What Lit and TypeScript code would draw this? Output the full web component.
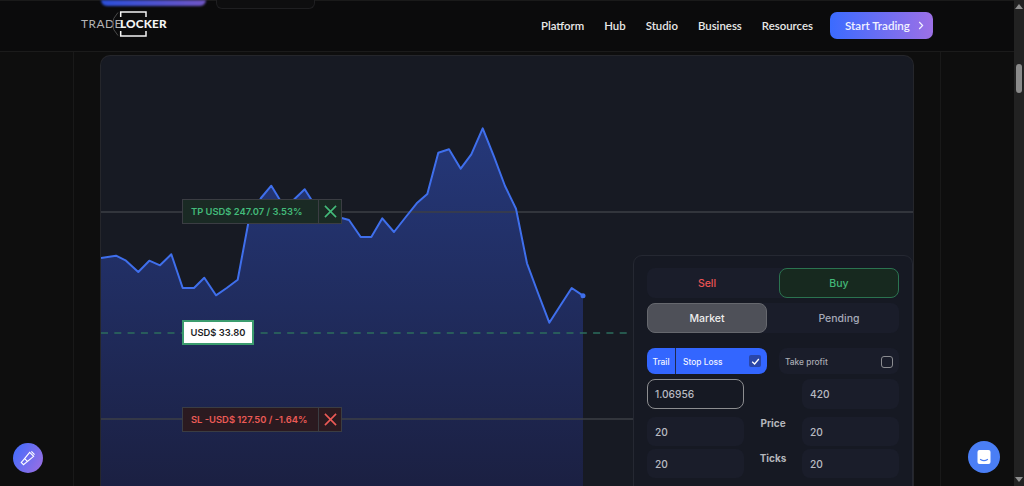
import { LitElement, html, css, svg } from "lit";
import { customElement } from "lit/decorators.js";

const pts: [number, number][] = [
  [101,258],[116,255.7],[126,260.7],[138.3,272],[149.3,260.7],[160,265.3],[171.3,254.3],[182.7,288],[194,288],[204.3,277.7],[216,295.3],[226.7,288],[237.7,279.7],[248.3,223],[261,198],[271.3,185.7],[283,205],[293.5,200],[304.7,189.3],[316.7,208],[327,215],[338,217],[349,220],[360.7,237],[371.3,237],[382.3,218.3],[394,232],[405,218],[416.7,203.3],[427.3,194],[438.3,152.7],[449,149.3],[460.7,168.7],[471.3,154.3],[482.7,128.3],[494,156.7],[505,186],[516,208.7],[527,263.3],[538,293],[549.3,322.7],[560.7,305],[571.7,288],[583,295.7],
];
// chart coordinates are local to the card, whose corner sits at 101,56
const local = pts.map(([x, y]) => `${(x - 101).toFixed(1)},${(y - 56).toFixed(1)}`);
const linePath = "M" + local.join(" L");
const areaPath = `${linePath} L482,430 L0,430 Z`;

const closeIcon = svg`<svg class="x" viewBox="0 0 14 14" width="13" height="13"><path d="M1 1 L13 13 M13 1 L1 13" fill="none" stroke="currentColor" stroke-width="1.7"/></svg>`;

@customElement("app-root")
export class AppRoot extends LitElement {
  static styles = css`
    :host { display: block; width: 1024px; height: 486px; overflow: hidden; position: relative; background: #0e0e0e; font-family: "Inter", "Liberation Sans", sans-serif; }
    .view { display: flex; height: 486px; }
    .page { flex: 1; min-width: 0; display: flex; flex-direction: column; }
    header { height: 52px; flex: none; position: relative; box-sizing: border-box; border-bottom: 1px solid #1b1b1b; border-top: 1px solid #1a1a1a; background: #0b0b0c; display: flex; align-items: center; justify-content: space-between; padding: 0 81px; }
    .peek { position: absolute; top: -1px; left: 101px; display: flex; gap: 10px; align-items: flex-start; }
    .peek-a { width: 105px; height: 6px; border-radius: 0 0 6px 6px; background: linear-gradient(90deg, #2b4fd8, #6f55c4); filter: blur(1px); }
    .peek-b { width: 97px; height: 8px; border-radius: 0 0 6px 6px; background: #0e0e0f; border: 1px solid #1f1f21; border-top: 0; filter: blur(.5px); }

    .logo { display: flex; align-items: center; position: relative; height: 26px; margin-top: -5px; font-family: "Lato", sans-serif; font-size: 11.8px; white-space: nowrap; }
    .trade { color: #b4b4b4; font-weight: 400; width: 39px; letter-spacing: .55px; }
    .locker { color: #f4f4f4; font-weight: 900; letter-spacing: .15px; }
    .mark { position: absolute; left: 0; top: 0; width: 90px; height: 26px; overflow: visible; pointer-events: none; }

    nav { display: flex; align-items: center; margin-top: -1px; }
    .links { display: flex; gap: 20px; margin-right: 17px; }
    .links span { color: #e8e8e8; font-family: "Lato", sans-serif; font-weight: 600; font-size: 11.4px; }
    .cta { box-sizing: border-box; width: 103px; height: 27px; border-radius: 7px; display: flex; align-items: center; gap: 8px; padding-left: 15px; color: #f2f2ff; background: linear-gradient(90deg, #3b6bff, #9c70e6); font-family: "Lato", sans-serif; font-weight: 600; font-size: 11.6px; white-space: nowrap; }

    .frame { flex: 1; min-height: 0; box-sizing: border-box; margin: 0 73px; border-left: 1px solid #191919; border-right: 1px solid #191919; padding: 4px 27px 0; }
    .card { position: relative; height: 480px; box-sizing: border-box; background: #171a23; border-radius: 9px; box-shadow: 0 0 0 1px #25262b; overflow: hidden; }
    .chart { position: absolute; left: 0; top: 0; width: 812px; height: 430px; display: block; }

    .tag { position: absolute; left: 81px; box-sizing: border-box; width: 160px; height: 25px; display: flex; align-items: center; border: 1px solid #3b3d43; font-size: 9.4px; font-weight: 600; white-space: nowrap; }
    .tag .txt { flex: 1; padding-left: 8px; }
    .tag .close { width: 23px; height: 100%; box-sizing: border-box; border-left: 1px solid #3b3d43; display: flex; align-items: center; justify-content: center; }
    .tp { top: 143px; background: #1a2a24; color: #43bb7a; }
    .sl { top: 351px; background: #2b1a20; color: #ec5a56; }
    .now { position: absolute; left: 81px; top: 264px; box-sizing: border-box; width: 72px; height: 25px; display: flex; align-items: center; justify-content: center; background: #fff; border: 2px solid #3b9c6e; color: #1c1c1e; font-size: 9.4px; font-weight: 600; white-space: nowrap; }

    .panel { position: absolute; left: 532px; top: 199px; width: 280px; height: 290px; box-sizing: border-box; padding: 12px 13px 0; background: #161923; border: 1px solid #252832; border-radius: 9px 9px 0 0; display: flex; flex-direction: column; font-size: 10.5px; }
    .seg { display: grid; grid-template-columns: 1fr 1fr; gap: 12px; height: 30px; flex: none; background: #1a1d2a; border-radius: 8px; font-weight: 500; }
    .seg + .seg { margin-top: 5px; }
    .seg > div { display: flex; align-items: center; justify-content: center; border-radius: 8px; box-sizing: border-box; }
    .sell { color: #ea5455; }
    .buy { color: #43b878; background: #17291f; border: 1px solid #2b7350; }
    .market { background: #4e5058; border: 1px solid #66686e; color: #eee; }
    .pending { color: #a6a9b8; }

    .toggles { display: grid; grid-template-columns: 1fr 1fr; gap: 12px; height: 26px; margin-top: 15px; flex: none; font-size: 8.4px; font-weight: 500; }
    .sltp { display: flex; align-items: center; background: #3366ff; color: #f2f4ff; border-radius: 8px; }
    .trail { width: 29px; height: 100%; box-sizing: border-box; padding-top: 1px; display: flex; align-items: center; justify-content: center; border-right: 1px solid #20294c; }
    .sl-label { flex: 1; padding: 1px 0 0 7px; }
    .tick { width: 12px; height: 12px; margin-right: 6px; box-sizing: border-box; border-radius: 2px; background: #2a46a8; display: flex; align-items: center; justify-content: center; }
    .tpbox { display: flex; align-items: center; justify-content: space-between; padding: 1px 6px 0 6px; background: #1a1d2a; border-radius: 8px; color: #a9abb3; }
    .empty { width: 12px; height: 12px; box-sizing: border-box; border: 1px solid #8b8c90; border-radius: 3px; }

    .fields { display: grid; grid-template-columns: 97px 1fr 97px; grid-template-rows: 30px 8px 29px 3px 29px; margin-top: 5px; color: #b9bbc2; font-size: 10.2px; font-weight: 500; }
    .f { box-sizing: border-box; display: flex; align-items: center; padding-left: 8px; background: #1a1d2a; border-radius: 8px; }
    .focus { background: transparent; border: 1px solid #8c8d90; padding-left: 7px; }
    .lab { display: flex; justify-content: center; font-size: 10px; font-weight: 700; color: #b4b6bc; }
    .lab-price { padding-top: 0; }
    .lab-ticks { padding-top: 3px; }
    .row-gap { grid-column: 1 / -1; }

    .bar { width: 10px; flex: none; background: #222; position: relative; display: flex; flex-direction: column; align-items: center; }
    .arrow { width: 0; height: 0; border-left: 4px solid transparent; border-right: 4px solid transparent; }
    .up { border-bottom: 5px solid #8f8f8f; margin-top: 4px; }
    .thumb { width: 6px; height: 29px; margin-top: 55px; border-radius: 3px; background: #8a8a8a; }
    .down { border-top: 5px solid #8f8f8f; margin-top: auto; margin-bottom: 4px; }

    .fab { position: absolute; border-radius: 50%; display: flex; align-items: center; justify-content: center; }
    .fab-l { left: 13px; top: 443px; width: 30px; height: 30px; background: linear-gradient(120deg, #3d6cff, #a06fe0); }
    .fab-r { left: 968px; top: 441px; width: 32px; height: 32px; background: #4a7ef5; }
  `;

  render() {
    return html`
      <div class="view">
        <div class="page">
          <header>
            <div class="peek"><div class="peek-a"></div><div class="peek-b"></div></div>
            <div class="logo">
              <span class="trade">TRADE</span><span class="locker">LOCKER</span>
              <svg class="mark" viewBox="0 0 90 26">
                <path d="M37 1.5 Q 26 13 37 24.5" fill="none" stroke="#4a4a4a" stroke-width="1"/>
                <path d="M39.7 6 V1 H65 V6 M39.7 20 V25 H65 V20" fill="none" stroke="#f4f4f4" stroke-width="1.5"/>
              </svg>
            </div>
            <nav>
              <div class="links"><span>Platform</span><span>Hub</span><span>Studio</span><span>Business</span><span>Resources</span></div>
              <div class="cta">Start Trading
                <svg width="6" height="9" viewBox="0 0 6 9"><path d="M1.2 1 L4.6 4.5 L1.2 8" fill="none" stroke="#f2f2ff" stroke-width="1.2"/></svg>
              </div>
            </nav>
          </header>
          <div class="frame">
            <div class="card">
              <svg class="chart" viewBox="0 0 812 430">
                <defs>
                  <linearGradient id="fill" x1="0" y1="72" x2="0" y2="430" gradientUnits="userSpaceOnUse">
                    <stop offset="0" stop-color="#25387a"/>
                    <stop offset="1" stop-color="#1b2042"/>
                  </linearGradient>
                </defs>
                <path d=${areaPath} fill="url(#fill)"/>
                <path d="M0 156 H812" stroke="#3d3f46" stroke-width="1.4"/>
                <path d="M0 363 H812" stroke="#3d3f46" stroke-width="1.4"/>
                <path d="M0 277 H532" stroke="#2c6e5e" stroke-width="1.3" stroke-dasharray="7 6.3"/>
                <path d=${linePath} fill="none" stroke="#3f6fec" stroke-width="2" stroke-linejoin="round"/>
                <circle cx="482" cy="239.7" r="2.5" fill="#3f6fec"/>
              </svg>
              <div class="tag tp"><span class="txt">TP USD$ 247.07 / 3.53%</span><span class="close">${closeIcon}</span></div>
              <div class="now">USD$ 33.80</div>
              <div class="tag sl"><span class="txt">SL -USD$ 127.50 / -1.64%</span><span class="close">${closeIcon}</span></div>
              <div class="panel">
                <div class="seg"><div class="sell">Sell</div><div class="buy">Buy</div></div>
                <div class="seg"><div class="market">Market</div><div class="pending">Pending</div></div>
                <div class="toggles">
                  <div class="sltp">
                    <span class="trail">Trail</span><span class="sl-label">Stop Loss</span>
                    <span class="tick"><svg width="9" height="9" viewBox="0 0 9 9"><path d="M1.2 4.8 L3.6 7 L7.8 2" fill="none" stroke="#fff" stroke-width="1.3"/></svg></span>
                  </div>
                  <div class="tpbox"><span>Take profit</span><span class="empty"></span></div>
                </div>
                <div class="fields">
                  <div class="f focus">1.06956</div><div></div><div class="f">420</div>
                  <div class="row-gap"></div>
                  <div class="f">20</div><div class="lab lab-price">Price</div><div class="f">20</div>
                  <div class="row-gap"></div>
                  <div class="f">20</div><div class="lab lab-ticks">Ticks</div><div class="f">20</div>
                </div>
              </div>
            </div>
          </div>
        </div>
        <div class="bar">
          <div class="arrow up"></div>
          <div class="thumb"></div>
          <div class="arrow down"></div>
        </div>
      </div>
      <div class="fab fab-l">
        <svg width="18" height="18" viewBox="0 0 16 16" fill="none" stroke="#fff" stroke-width="1"><path d="M9.5 3 L13 6.5 L7.5 11 L5 8.5 Z"/><path d="M5 8.5 L2 12 L4 14 L7.5 11"/><path d="M11 2.2 L13.8 5"/></svg>
      </div>
      <div class="fab fab-r">
        <svg width="16" height="16" viewBox="0 0 16 16"><rect x="1.5" y="1" width="13" height="14" rx="2" fill="#fff"/><path d="M4.5 10.5 Q8 12.8 11.5 10.5" fill="none" stroke="#4a7ef5" stroke-width="1.2" stroke-linecap="round"/></svg>
      </div>
    `;
  }
}
